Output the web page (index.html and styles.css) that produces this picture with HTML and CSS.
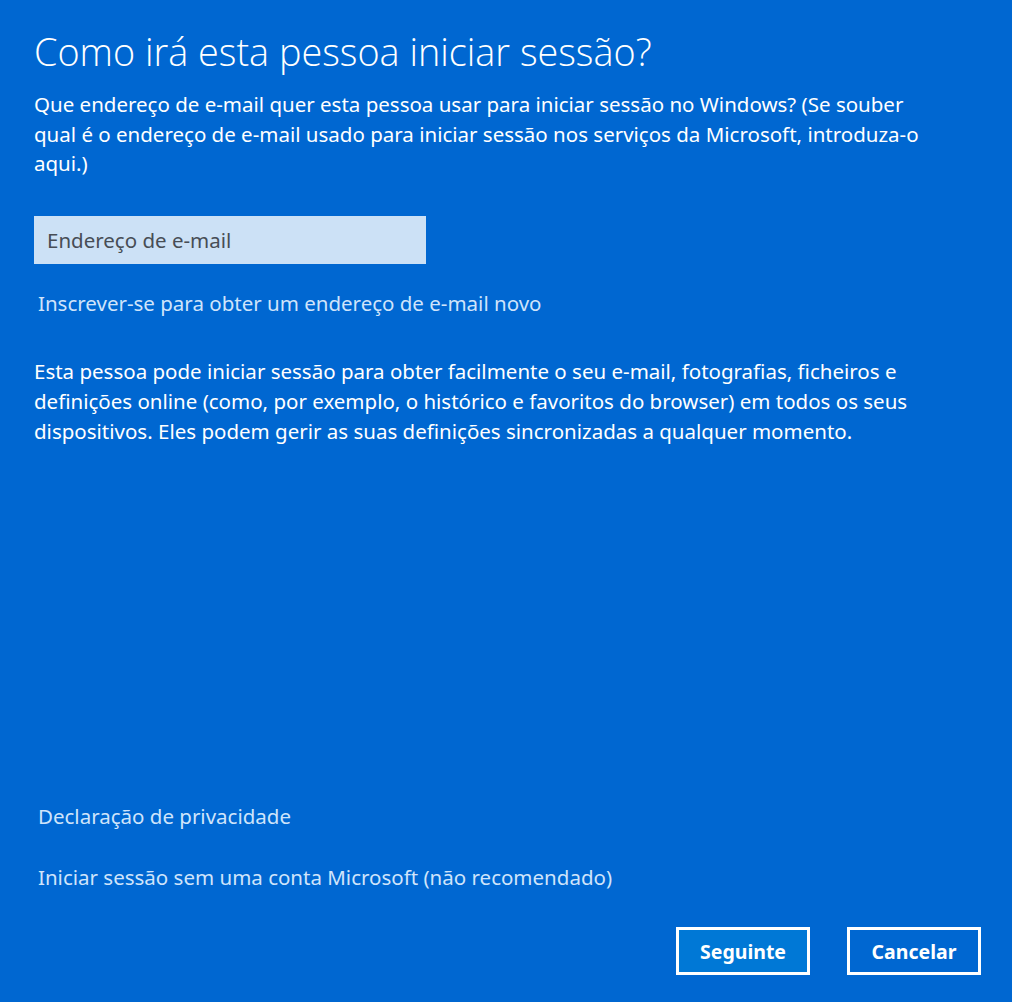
FILE: index.html
```html
<!DOCTYPE html>
<html lang="pt">
<head>
<meta charset="utf-8">
<title>Como irá esta pessoa iniciar sessão?</title>
<link rel="stylesheet" href="styles.css">
</head>
<body>
<div class="page">
  <main class="content">
    <h1 class="title">Como irá esta pessoa iniciar sessão?</h1>
    <p class="intro">Que endereço de e-mail quer esta pessoa usar para iniciar sessão no Windows? (Se souber qual é o endereço de e-mail usado para iniciar sessão nos serviços da Microsoft, introduza-o aqui.)</p>
    <div class="field"><span class="placeholder">Endereço de e-mail</span></div>
    <a class="link signup">Inscrever-se para obter um endereço de e-mail novo</a>
    <p class="info">Esta pessoa pode iniciar sessão para obter facilmente o seu e-mail, fotografias, ficheiros e definições online (como, por exemplo, o histórico e favoritos do browser) em todos os seus dispositivos. Eles podem gerir as suas definições sincronizadas a qualquer momento.</p>
  </main>
  <div class="footer-links">
    <a class="link">Declaração de privacidade</a>
    <a class="link">Iniciar sessão sem uma conta Microsoft (não recomendado)</a>
  </div>
  <div class="actions">
    <button class="btn btn-primary">Seguinte</button>
    <button class="btn">Cancelar</button>
  </div>
</div>
</body>
</html>
```
FILE: styles.css
```css
html, body {
  margin: 0;
  padding: 0;
  height: 100%;
}
body {
  background: #0067d1;
  color: #ffffff;
  font-family: "Noto Sans", "Open Sans", sans-serif;
}
.page {
  height: 1002px;
  box-sizing: border-box;
  display: flex;
  flex-direction: column;
  padding: 0 31px 27px 34px;
}
.content {
  flex: 1;
  display: flex;
  flex-direction: column;
  align-items: flex-start;
}
.title {
  font-family: "Open Sans", sans-serif;
  font-weight: 300;
  font-size: 37.8px;
  line-height: 48px;
  margin: 28px 0 0 0;
}
.intro {
  font-size: 20.5px;
  line-height: 29.5px;
  margin: 14px 0 0 0;
  max-width: 910px;
}
.field {
  margin-top: 37px;
  width: 392px;
  height: 48px;
  box-sizing: border-box;
  background: #cce1f6;
  display: flex;
  align-items: center;
  padding-left: 13px;
}
.placeholder {
  color: #474d55;
  font-size: 20.5px;
}
.link {
  color: #cfe4fb;
  font-size: 20.5px;
  line-height: 29px;
  margin-left: 4px;
}
.signup {
  margin-top: 25px;
}
.info {
  font-size: 20.5px;
  line-height: 30px;
  margin: 38px 0 0 0;
  max-width: 920px;
}
.footer-links {
  display: flex;
  flex-direction: column;
  align-items: flex-start;
  gap: 32px;
}
.actions {
  display: flex;
  justify-content: flex-end;
  gap: 37px;
  margin-top: 35px;
}
.btn {
  width: 134px;
  height: 48px;
  box-sizing: border-box;
  border: 3px solid #ffffff;
  background: #0067d1;
  color: #ffffff;
  font-family: "Noto Sans", "Open Sans", sans-serif;
  font-weight: 700;
  font-size: 19.5px;
  padding: 0;
}
.btn-primary {
  background: #0078d6;
}
```
